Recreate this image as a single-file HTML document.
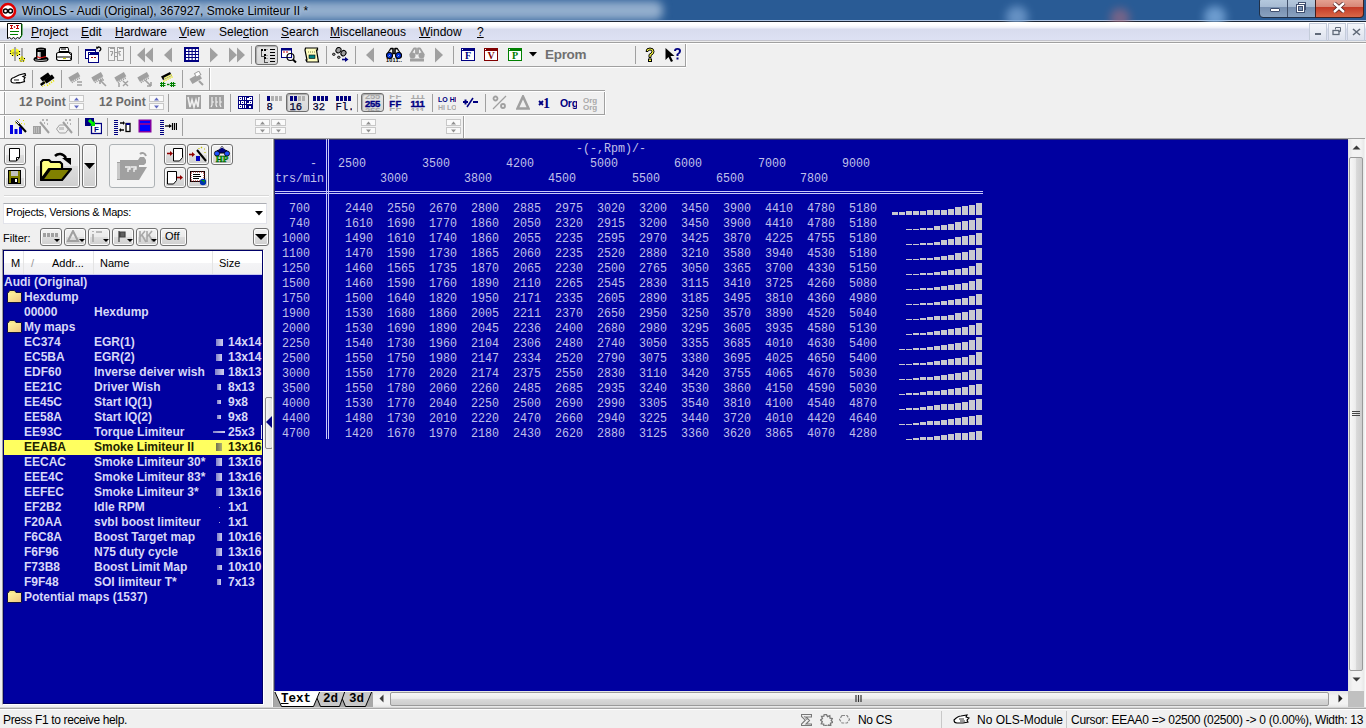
<!DOCTYPE html>
<html><head><meta charset="utf-8">
<style>
*{box-sizing:border-box;margin:0;padding:0}
html,body{width:1366px;height:728px;overflow:hidden;background:#F0F0F0;font-family:"Liberation Sans",sans-serif;}
.a{position:absolute}
#title{left:0;top:0;width:1366px;height:22px;background:#295B95;overflow:hidden}
#title .glow{left:-30px;top:1px;width:693px;height:19px;background:#93AECD;filter:blur(4px);border-radius:8px}
#title .txt{left:22px;top:4px;font-size:12px;color:#000;white-space:nowrap;text-shadow:0 0 5px #B8CCE4,0 0 3px #C0D0E6}
#menu{left:0;top:22px;width:1366px;height:20px;background:linear-gradient(#FFFFFF 0,#FFFFFF 3px,#ECEEF8 6px,#D8DCEE 7px,#DDE1F3 17px,#DDE1F3 18px,#C4C4CC 18px,#C4C4CC 19px,#ECECEC 19px)}
#menu span{position:absolute;top:3px;font-size:12px;color:#000;white-space:nowrap}
#menu u{text-decoration:underline;text-underline-offset:1px}
#tbar{left:0;top:42px;width:1366px;height:97px;background:#F0F0F0;border-bottom:1px solid #A0A0A0}
.pbtn{position:absolute;border:1px solid #6E6E6E;border-radius:3px;background:linear-gradient(#E6E6E6,#D8D8D8);box-shadow:inset 1px 1px 1px #A8A8A8}
.spn{position:absolute;border:1px solid #C8C8C8;background:#FAFAFA}
.tpt{font-size:12px;font-weight:bold;color:#6A6A6A;white-space:nowrap}
.hl{position:absolute;height:1px;background:#A0A0A0}
.vl{position:absolute;width:1px;background:#A0A0A0}
.sep{position:absolute;width:1px;height:18px;background:#A0A0A0}
#left{left:0;top:139px;width:274px;height:569px;background:#F0F0F0}
#data{left:273px;top:138px;width:1093px;height:569px;background:#F0F0F0}
#blue{left:1px;top:1px;width:1074px;height:552px;background:#0000A0;overflow:hidden}
.vsb{background:linear-gradient(90deg,#E3E3E3,#F3F3F3 30%,#F3F3F3 80%,#E8E8E8)}
.vthumb{border:1px solid #9A9A9A;border-radius:2px;background:linear-gradient(90deg,#F7F7F7,#ECECEC 45%,#D8D8D8 55%,#CDCDCD)}
.hsb{background:linear-gradient(#E3E3E3,#F3F3F3 30%,#F3F3F3 80%,#E8E8E8)}
.hthumb{border:1px solid #9A9A9A;border-radius:2px;background:linear-gradient(#F7F7F7,#ECECEC 45%,#D8D8D8 55%,#CDCDCD)}
.m{position:absolute;font-family:"Liberation Mono",monospace;font-size:11.67px;color:#C0C0EA;white-space:pre;line-height:15px;transform:translateY(1px) scaleY(1.06);transform-origin:0 100%}
.bar{position:absolute;width:6px;background:#C8C8D0}
.mono{font-family:"Liberation Mono",monospace;font-size:11.67px;color:#D4D4F4;white-space:pre;line-height:15px}
#status{left:0;top:707px;width:1366px;height:21px;background:linear-gradient(#D4D4D4 0,#D4D4D4 1px,#A8A8A8 1px,#A8A8A8 2px,#FFFFFF 2px,#FFFFFF 3px,#F0F0F0 3px)}
#status span{position:absolute;top:6px;font-size:12px;color:#000;white-space:nowrap}
#list{left:2px;top:110px;width:262px;height:456px;background:#0000A0;border:1px solid;border-color:#A0A0A0 #FFFFFF #FFFFFF #A0A0A0;overflow:hidden}
.lhdr{background:linear-gradient(#FFFFFF 0,#FFFFFF 50%,#F4F4F6 51%,#F0F0F2 100%)}
.lh{font-size:11px;white-space:nowrap;line-height:12px}
.lt{font-size:12px;font-weight:bold;white-space:nowrap;line-height:15px}
.lrow{position:absolute;left:0;height:15px;width:259px;font-size:11px;font-weight:bold;color:#D8D8F8;letter-spacing:0.5px;white-space:nowrap}
.lrow span{position:absolute;top:1px}
.tabt{font-family:"Liberation Mono",monospace;font-weight:bold;font-size:12.5px;line-height:14px;color:#000;white-space:pre}
.btn{position:absolute;border:1px solid #707070;border-radius:3px;background:linear-gradient(#F2F2F2 0,#EBEBEB 50%,#DDDDDD 51%,#CFCFCF 100%);box-shadow:inset 0 0 0 1px #FCFCFC}
.btnd{position:absolute;border:1px solid #ADB2B5;border-radius:3px;background:#F4F4F4}
.mdib{border:1px solid #C4CCDA;background:linear-gradient(#F4F6FA,#DDE2EE)}
</style></head><body>
<div id="title" class="a">
  <div class="a glow"></div>
  <div class="a" style="left:0;top:20px;width:1366px;height:1px;background:#A8C0E0"></div><div class="a" style="left:0;top:21px;width:1366px;height:1px;background:#1C2634"></div>
  <svg class="a" style="left:0;top:2px" width="17" height="18"><circle cx="8" cy="9" r="7" fill="#fff" stroke="#E00000" stroke-width="2.6"/><circle cx="5.5" cy="9" r="2" fill="none" stroke="#000" stroke-width="1.4"/><circle cx="10.5" cy="9" r="2" fill="none" stroke="#000" stroke-width="1.4"/></svg>
  <div class="a" style="left:1006px;top:6px;width:22px;height:22px;border-radius:50%;background:#7FA8D8;filter:blur(4px);opacity:0.7"></div>
  <div class="a" style="left:1110px;top:8px;width:20px;height:20px;border-radius:50%;background:#A86A80;filter:blur(4px);opacity:0.6"></div>
  <div class="a" style="left:1204px;top:6px;width:22px;height:22px;border-radius:50%;background:#8AB8E8;filter:blur(4px);opacity:0.7"></div>
  <div class="a" style="left:1259px;top:-3px;width:105px;height:21px;border:1px solid #203048;border-radius:4px;background:linear-gradient(#B8CCE0 0,#A8BCD4 45%,#7890B0 50%,#8AA2C0 100%)"></div>
  <div class="a" style="left:1315px;top:-3px;width:49px;height:21px;border:1px solid #402020;border-radius:0 0 4px 0;background:linear-gradient(#E8A898 0,#D88878 45%,#C43C28 50%,#D86848 100%)"></div>
  <div class="a" style="left:1287px;top:0;width:1px;height:17px;background:#40506A"></div>
  <div class="a" style="left:1270px;top:8px;width:10px;height:4px;background:#fff;border:1px solid #405070;border-radius:1px"></div>
  <svg class="a" style="left:1294px;top:1px" width="14" height="13"><rect x="4.5" y="1.5" width="7" height="7" fill="#fff" stroke="#405070"/><rect x="2.5" y="3.5" width="8" height="8" fill="#fff" stroke="#405070"/><rect x="4.5" y="5.5" width="4" height="4" fill="#7890B0" stroke="#405070"/></svg>
  <svg class="a" style="left:1332px;top:2px" width="14" height="11"><path d="M2 1l10 9M12 1L2 10" stroke="#502020" stroke-width="4"/><path d="M2 1l10 9M12 1L2 10" stroke="#fff" stroke-width="2.4"/></svg>
  <div class="a txt">WinOLS - Audi (Original), 367927, Smoke Limiteur II *</div>
</div>
<div id="menu" class="a">
  <svg class="a" style="left:7px;top:1px" width="17" height="17"><path d="M0.5 0.5h14v12l-2 3-2-1-2 1.5-2-1.5-2 1.5-2-1.5-2 1z" fill="#fff" stroke="#000"/><path d="M15 1v11l-2 3" stroke="#008000" stroke-width="1" fill="none"/><path d="M3 2.5h3M4.5 2.5v3M3 5.5h3M9 2.5h3M10.5 2.5v3M9 5.5h3" stroke="#C00000" stroke-width="1"/><path d="M7.5 3l1 1-1 1-1-1z" fill="#C00000"/><path d="M3 8.5h9M3 11.5h8" stroke="#008000" stroke-width="1.2"/></svg>
  <span style="left:31px"><u>P</u>roject</span>
  <span style="left:81px"><u>E</u>dit</span>
  <span style="left:115px"><u>H</u>ardware</span>
  <span style="left:179px"><u>V</u>iew</span>
  <span style="left:219px">Sele<u>c</u>tion</span>
  <span style="left:281px"><u>S</u>earch</span>
  <span style="left:330px"><u>M</u>iscellaneous</span>
  <span style="left:419px"><u>W</u>indow</span>
  <span style="left:477px"><u>?</u></span>
  <div class="a mdib" style="left:1309px;top:1px;width:18px;height:18px"></div>
  <div class="a mdib" style="left:1328px;top:1px;width:18px;height:18px"></div>
  <div class="a mdib" style="left:1347px;top:1px;width:18px;height:18px"></div>
  <i class="a" style="left:1315px;top:11px;width:6px;height:2px;background:#606A78"></i>
  <svg class="a" style="left:1332px;top:5px" width="10" height="9"><path d="M3.5 2.5v-2h5v4h-2" fill="none" stroke="#606A78"/><rect x="1" y="3.5" width="6" height="4" fill="none" stroke="#606A78" stroke-width="1.3"/></svg>
  <svg class="a" style="left:1352px;top:6px" width="9" height="8"><path d="M1 1l7 6M8 1L1 7" stroke="#606A78" stroke-width="1.6"/></svg>
</div>
<div id="tbar" class="a"><i class="a" style="left:0px;top:0px;width:1366px;height:1px;background:#A0A0A0"></i>
<i class="a" style="left:0px;top:1px;width:1366px;height:1px;background:#FFFFFF"></i>
<i class="a" style="left:0px;top:24px;width:686px;height:1px;background:#A0A0A0"></i>
<i class="a" style="left:0px;top:25px;width:686px;height:1px;background:#FFFFFF"></i>
<i class="a" style="left:0px;top:48px;width:605px;height:1px;background:#A0A0A0"></i>
<i class="a" style="left:0px;top:49px;width:605px;height:1px;background:#FFFFFF"></i>
<i class="a" style="left:0px;top:72px;width:605px;height:1px;background:#A0A0A0"></i>
<i class="a" style="left:0px;top:73px;width:605px;height:1px;background:#FFFFFF"></i>
<i class="a" style="left:685px;top:2px;width:1px;height:22px;background:#A0A0A0"></i>
<i class="a" style="left:686px;top:2px;width:1px;height:22px;background:#FFFFFF"></i>
<i class="a" style="left:209px;top:26px;width:1px;height:22px;background:#A0A0A0"></i>
<i class="a" style="left:210px;top:26px;width:1px;height:22px;background:#FFFFFF"></i>
<i class="a" style="left:604px;top:50px;width:1px;height:22px;background:#A0A0A0"></i>
<i class="a" style="left:605px;top:50px;width:1px;height:22px;background:#FFFFFF"></i>
<i class="a" style="left:463px;top:74px;width:1px;height:22px;background:#A0A0A0"></i>
<i class="a" style="left:464px;top:74px;width:1px;height:22px;background:#FFFFFF"></i>
<i class="a" style="left:0px;top:2px;width:4px;height:22px;background:#FAFAFA"></i>
<i class="a" style="left:4px;top:2px;width:1px;height:22px;background:#A0A0A0"></i>
<i class="a" style="left:5px;top:2px;width:1px;height:22px;background:#FFFFFF"></i>
<i class="a" style="left:0px;top:26px;width:4px;height:22px;background:#FAFAFA"></i>
<i class="a" style="left:4px;top:26px;width:1px;height:22px;background:#A0A0A0"></i>
<i class="a" style="left:5px;top:26px;width:1px;height:22px;background:#FFFFFF"></i>
<i class="a" style="left:0px;top:50px;width:4px;height:22px;background:#FAFAFA"></i>
<i class="a" style="left:4px;top:50px;width:1px;height:22px;background:#A0A0A0"></i>
<i class="a" style="left:5px;top:50px;width:1px;height:22px;background:#FFFFFF"></i>
<i class="a" style="left:0px;top:74px;width:4px;height:22px;background:#FAFAFA"></i>
<i class="a" style="left:4px;top:74px;width:1px;height:22px;background:#A0A0A0"></i>
<i class="a" style="left:5px;top:74px;width:1px;height:22px;background:#FFFFFF"></i>
<i class="a" style="left:78px;top:4px;width:1px;height:18px;background:#A0A0A0"></i>
<i class="a" style="left:130px;top:4px;width:1px;height:18px;background:#A0A0A0"></i>
<i class="a" style="left:251px;top:4px;width:1px;height:18px;background:#A0A0A0"></i>
<i class="a" style="left:326px;top:4px;width:1px;height:18px;background:#A0A0A0"></i>
<i class="a" style="left:355px;top:4px;width:1px;height:18px;background:#A0A0A0"></i>
<i class="a" style="left:453px;top:4px;width:1px;height:18px;background:#A0A0A0"></i>
<i class="a" style="left:635px;top:4px;width:1px;height:18px;background:#A0A0A0"></i>
<i class="a" style="left:32px;top:28px;width:1px;height:18px;background:#A0A0A0"></i>
<i class="a" style="left:61px;top:28px;width:1px;height:18px;background:#A0A0A0"></i>
<i class="a" style="left:182px;top:28px;width:1px;height:18px;background:#A0A0A0"></i>
<i class="a" style="left:168px;top:52px;width:1px;height:18px;background:#A0A0A0"></i>
<i class="a" style="left:230px;top:52px;width:1px;height:18px;background:#A0A0A0"></i>
<i class="a" style="left:259px;top:52px;width:1px;height:18px;background:#A0A0A0"></i>
<i class="a" style="left:357px;top:52px;width:1px;height:18px;background:#A0A0A0"></i>
<i class="a" style="left:432px;top:52px;width:1px;height:18px;background:#A0A0A0"></i>
<i class="a" style="left:485px;top:52px;width:1px;height:18px;background:#A0A0A0"></i>
<i class="a" style="left:78px;top:76px;width:1px;height:18px;background:#A0A0A0"></i>
<i class="a" style="left:107px;top:76px;width:1px;height:18px;background:#A0A0A0"></i>
<i class="a" style="left:182px;top:76px;width:1px;height:18px;background:#A0A0A0"></i>
<svg class="a" style="left:9px;top:5px" width="17" height="16"><ellipse cx="6" cy="5.5" rx="5" ry="4" fill="#F8F820"/><path d="M1.5 3.5v1M1.5 6v1M3 8.5h1M5.5 9h1M8 8.5h1M10.5 7v1M10.5 4v1" stroke="#000" stroke-width="1.2"/><rect x="5" y="0" width="2" height="14" fill="#A8A8A8"/><ellipse cx="6" cy="6" rx="3" ry="1.5" fill="#A0A040" opacity="0.7"/><ellipse cx="13" cy="12.5" rx="3" ry="2.5" fill="#F0F020"/><path d="M10.5 11v1M15.5 11v1M11.5 14h1M14 14h1" stroke="#000" stroke-width="1"/><rect x="12" y="1" width="2" height="13" fill="#A8A8A8"/><rect x="12" y="9" width="2" height="4" fill="#C0C030"/></svg>
<svg class="a" style="left:33px;top:5px" width="16" height="16"><path d="M3 1.5Q8 -0.5 13 1.5V11H3z" fill="#000"/><path d="M0.5 12.5Q0.5 10 3 10h10q2.5 0 2.5 2.5Q15.5 15 8 15T0.5 12.5z" fill="#000"/><path d="M2 12.8Q8 14.5 14 12.8" stroke="#B0B0B0" stroke-width="1" fill="none"/><path d="M5 2.5h6" stroke="#808080" stroke-width="0.8"/><rect x="4.5" y="5" width="3" height="7" fill="#E8E8E8"/><rect x="6.5" y="5" width="1" height="7" fill="#A0A0A0"/><path d="M4 9.5l3 1.5 6-1.5" stroke="#E01010" stroke-width="1.1" fill="none"/></svg>
<svg class="a" style="left:56px;top:5px" width="16" height="16"><path d="M4 0.5h8l1 4H3z" fill="#fff" stroke="#000"/><path d="M5 2h5" stroke="#000"/><rect x="0.5" y="5.5" width="15" height="8" rx="2" fill="#fff" stroke="#000" stroke-width="1.2"/><path d="M1 10h14" stroke="#000"/><path d="M7 11.5h3" stroke="#C0C000" stroke-width="1.2"/><path d="M13 6l2 2M14 11l1 1" stroke="#000" stroke-width="0.8"/></svg>
<svg class="a" style="left:85px;top:2px" width="17" height="19"><rect x="0.5" y="5.5" width="10" height="9" fill="#fff" stroke="#000080"/><rect x="0" y="5" width="11" height="2" fill="#000080"/><rect x="3.5" y="8.5" width="10" height="10" fill="#fff" stroke="#000080"/><rect x="3" y="8" width="11" height="3" fill="#000080"/><rect x="4" y="9" width="1" height="1" fill="#fff"/><path d="M6 13.5h2M9 13.5h2" stroke="#A01010" stroke-width="1"/><path d="M12.5 3.5a2 2 0 1 1 1.5 3.5" fill="none" stroke="#000" stroke-width="1.3"/><path d="M11 2.5l3 1-2.5 2z" fill="#000"/></svg>
<svg class="a" style="left:108px;top:5px" width="17" height="15"><rect x="0.5" y="0.5" width="6" height="13" fill="#F4F4F4" stroke="#A0A0A0"/><rect x="0" y="0" width="7" height="2" fill="#A0A0A0"/><rect x="9.5" y="0.5" width="6" height="13" fill="#F4F4F4" stroke="#A0A0A0"/><rect x="9" y="0" width="7" height="2" fill="#A0A0A0"/><rect x="1" y="1" width="1" height="1" fill="#fff"/><rect x="10" y="1" width="1" height="1" fill="#fff"/><path d="M7 5.5h2M7 9.5h2" stroke="#A0A0A0"/><path d="M2 4.5h2.5v2l-1 1v1.5M13 4.5h-2v2l1 1v1.5" stroke="#A0A0A0" fill="none" stroke-width="1.2"/></svg>
<svg class="a" style="left:137px;top:5px" width="16" height="16"><path d="M0 8l8-7.5v15zM8 8l8-7.5v15z" fill="#A0A0A0"/></svg>
<svg class="a" style="left:164px;top:5px" width="9" height="16"><path d="M0 8l8-7.5v15z" fill="#A0A0A0"/></svg>
<svg class="a" style="left:184px;top:5px" width="16" height="15"><rect x="0" y="0" width="15" height="15" fill="#000080"/><rect x="2.0" y="2" width="2.3" height="2" fill="#fff"/><rect x="2.0" y="5" width="2.3" height="2" fill="#fff"/><rect x="2.0" y="8" width="2.3" height="2" fill="#fff"/><rect x="2.0" y="11" width="2.3" height="2" fill="#fff"/><rect x="5.3" y="2" width="2.3" height="2" fill="#fff"/><rect x="5.3" y="5" width="2.3" height="2" fill="#fff"/><rect x="5.3" y="8" width="2.3" height="2" fill="#fff"/><rect x="5.3" y="11" width="2.3" height="2" fill="#fff"/><rect x="8.6" y="2" width="2.3" height="2" fill="#fff"/><rect x="8.6" y="5" width="2.3" height="2" fill="#fff"/><rect x="8.6" y="8" width="2.3" height="2" fill="#fff"/><rect x="8.6" y="11" width="2.3" height="2" fill="#fff"/><rect x="11.9" y="2" width="2.3" height="2" fill="#fff"/><rect x="11.9" y="5" width="2.3" height="2" fill="#fff"/><rect x="11.9" y="8" width="2.3" height="2" fill="#fff"/><rect x="11.9" y="11" width="2.3" height="2" fill="#fff"/></svg>
<svg class="a" style="left:210px;top:5px" width="9" height="16"><path d="M8 8L0 0.5v15z" fill="#A0A0A0"/></svg>
<svg class="a" style="left:229px;top:5px" width="16" height="16"><path d="M8 8L0 0.5v15zM16 8L8 0.5v15z" fill="#A0A0A0"/></svg>
<div class="a pbtn" style="left:255px;top:3px;width:23px;height:20px"></div>
<svg class="a" style="left:260px;top:7px" width="16" height="14"><rect x="1" y="0" width="2" height="2" fill="#000"/><rect x="4" y="0" width="2" height="2" fill="#000"/><rect x="6" y="0" width="2" height="1" fill="#A0A0A0"/><rect x="1" y="2" width="1" height="6" fill="#505050"/><rect x="2" y="7" width="3" height="1" fill="#505050"/><rect x="4" y="5" width="2" height="2" fill="#000"/><rect x="6" y="6" width="2" height="1" fill="#A0A0A0"/><rect x="4" y="8" width="1" height="6" fill="#505050"/><rect x="4" y="8" width="2" height="2" fill="#000"/><rect x="6" y="9" width="2" height="1" fill="#A0A0A0"/><rect x="5" y="13" width="3" height="1" fill="#505050"/><rect x="10" y="0" width="5" height="1" fill="#000"/><rect x="10" y="3" width="5" height="1" fill="#000"/><rect x="10" y="6" width="5" height="1" fill="#000"/><rect x="10" y="9" width="5" height="1" fill="#000"/><rect x="10" y="12" width="5" height="1" fill="#000"/></svg>
<svg class="a" style="left:281px;top:5px" width="16" height="16"><rect x="0.5" y="1.5" width="10" height="9" fill="#fff" stroke="#000080"/><rect x="0" y="1" width="11" height="2.5" fill="#000080"/><path d="M2 5h2M5 5h2" stroke="#D00000" stroke-width="1"/><circle cx="9.5" cy="10" r="3.5" fill="none" stroke="#000" stroke-width="1.2"/><path d="M12 12.5l3 3" stroke="#000" stroke-width="2"/></svg>
<svg class="a" style="left:304px;top:5px" width="16" height="16"><path d="M1.5 1h12v2h-1l2 12H3l-1-2h1L1 3z" fill="#FFFFC0" stroke="#000" stroke-width="1.2"/><rect x="5" y="8" width="6" height="3.5" fill="#008080" stroke="#000" stroke-width="0.6"/><path d="M4 5h7" stroke="#808040" stroke-dasharray="1 1"/></svg>
<svg class="a" style="left:332px;top:5px" width="17" height="16"><ellipse cx="6.5" cy="3.2" rx="2.4" ry="2.8" fill="#A0A0A0" stroke="#000" stroke-width="1" transform="rotate(35 6.5 3.2)"/><ellipse cx="1.8" cy="7.3" rx="1.3" ry="1.1" fill="#A0A0A0" stroke="#000" stroke-width="0.9"/><ellipse cx="11.5" cy="6.2" rx="2.4" ry="2.8" fill="#A0A0A0" stroke="#000" stroke-width="1" transform="rotate(35 11.5 6.2)"/><ellipse cx="6.8" cy="10.3" rx="1.3" ry="1.1" fill="#A0A0A0" stroke="#000" stroke-width="0.9"/><path d="M10 12.5h4.5" stroke="#000080" stroke-width="1.6"/><path d="M13 10l3.5 2.5L13 15z" fill="#000080"/></svg>
<svg class="a" style="left:366px;top:5px" width="9" height="16"><path d="M0 8l8-7.5v15z" fill="#A0A0A0"/></svg>
<svg class="a" style="left:386px;top:5px" width="16" height="15"><path d="M1 8L5 1.5h2v5h2v-5h2L15 8" fill="none" stroke="#000" stroke-width="1.6" stroke-linejoin="round"/><path d="M5 2.5l-2.5 4M11 2.5l2.5 4" stroke="#fff" stroke-width="0.7"/><circle cx="3.5" cy="8.5" r="3" fill="#0030E0" stroke="#000" stroke-width="1.1"/><circle cx="12.5" cy="8.5" r="3" fill="#0030E0" stroke="#000" stroke-width="1.1"/><path d="M2.5 9.5l1.5-1.5M11.5 9.5l1.5-1.5" stroke="#A0C8FF" stroke-width="0.9"/><text x="0" y="15" font-family="Liberation Sans" font-weight="bold" font-size="5.5" fill="#000" letter-spacing="0.2">1011..</text></svg>
<svg class="a" style="left:409px;top:5px" width="16" height="15"><path d="M1 8L5 1.5h2v5h2v-5h2L15 8" fill="none" stroke="#A0A0A0" stroke-width="1.8" stroke-linejoin="round"/><circle cx="3.5" cy="8.5" r="3" fill="#A0A0A0"/><circle cx="12.5" cy="8.5" r="3" fill="#A0A0A0"/><rect x="1" y="11.5" width="14" height="3" fill="#A0A0A0"/></svg>
<svg class="a" style="left:435px;top:5px" width="9" height="16"><path d="M8 8L0 0.5v15z" fill="#A0A0A0"/></svg>
<svg class="a" style="left:461px;top:6px" width="15" height="14"><rect x="0.5" y="0.5" width="13" height="12" fill="#fff" stroke="#000080"/><rect x="0" y="0" width="14" height="3" fill="#000080"/><rect x="1" y="1" width="1" height="1" fill="#fff"/><text x="7" y="11" text-anchor="middle" font-family="Liberation Serif" font-weight="bold" font-size="10" fill="#000080">F</text></svg>
<svg class="a" style="left:484px;top:6px" width="15" height="14"><rect x="0.5" y="0.5" width="13" height="12" fill="#fff" stroke="#800000"/><rect x="0" y="0" width="14" height="3" fill="#800000"/><rect x="1" y="1" width="1" height="1" fill="#fff"/><text x="7" y="11" text-anchor="middle" font-family="Liberation Serif" font-weight="bold" font-size="10" fill="#800000">V</text></svg>
<svg class="a" style="left:508px;top:6px" width="15" height="14"><rect x="0.5" y="0.5" width="13" height="12" fill="#fff" stroke="#008000"/><rect x="0" y="0" width="14" height="3" fill="#008000"/><rect x="1" y="1" width="1" height="1" fill="#fff"/><text x="7" y="11" text-anchor="middle" font-family="Liberation Serif" font-weight="bold" font-size="10" fill="#008000">P</text></svg>
<svg class="a" style="left:529px;top:10px" width="9" height="5"><path d="M0 0h8L4 4.5z" fill="#000"/></svg>
<span class="a" style="left:545px;top:4.5px;font-size:13.5px;letter-spacing:-0.3px;font-weight:bold;color:#707070;white-space:nowrap">Eprom</span>
<svg class="a" style="left:644px;top:5px" width="12" height="16"><path d="M2 4.5Q2 1 6 1t4 3.5q0 2.5-3 4v2H5v-3q3-1.2 3-3.3Q8 3 6 3T4 4.5z" fill="#FFFF40" stroke="#000" stroke-width="1"/><rect x="4.5" y="12" width="3" height="2.5" fill="#FFFF40" stroke="#000" stroke-width="1"/></svg>
<svg class="a" style="left:665px;top:5px" width="17" height="16"><path d="M0.5 1v12l3-3 2.5 5 2-1-2.5-5h4z" fill="#000"/><path d="M9 4Q9 1 12.5 1T16 4q0 2-2.5 3.5V9h-2V7q2.5-1 2.5-3 0-1.3-1.5-1.3T11 4z" fill="#000080"/><rect x="11.5" y="10.5" width="2" height="2" fill="#000080"/></svg>
<svg class="a" style="left:10px;top:31px" width="17" height="12"><path d="M1 7.5Q1 5 4 4.5L9 2l6-1.5.5 2L13 3.5l2 1-1 2 .5 2-5 1.5H4Q1 10 1 7.5z" fill="#fff" stroke="#000" stroke-width="1.2"/><path d="M4 7h5M6 9.5h4" stroke="#000" stroke-width="0.9"/></svg>
<svg class="a" style="left:39px;top:29px" width="17" height="16"><path d="M1 7L9 1.5 11.5 5 3.5 10.5z" fill="#000"/><path d="M4 11.5l1 1.5M6 10l1 1.5M8 8.5l1 1.5M10 7l1 1.5" stroke="#E8E800" stroke-width="1.3"/><path d="M5 9L13 3.5 15.5 7 7.5 12.5z" fill="#000"/><path d="M8 13.5l1 1.5M10 12l1 1.5M12 10.5l1 1.5M14 9l1 1.5" stroke="#E8E800" stroke-width="1.3"/><path d="M1 13l4-3 1.5 2-4 3z" fill="#000"/><path d="M3 15.5l1 .5M5 14l1 .5" stroke="#E8E800" stroke-width="1.2"/></svg>
<svg class="a" style="left:68px;top:29px" width="16" height="16"><g transform="rotate(-30 7 6)"><rect x="1" y="3" width="11" height="5" fill="#A0A0A0"/><path d="M2 8v2M4 8v2M6 8v2M8 8v2M10 8v2" stroke="#A0A0A0" stroke-width="1.2"/></g><path d="M9 11h5M9 14h5" stroke="#A0A0A0" stroke-width="1.6"/></svg>
<svg class="a" style="left:91px;top:29px" width="16" height="16"><g transform="rotate(-30 7 6)"><rect x="1" y="3" width="11" height="5" fill="#A0A0A0"/><path d="M2 8v2M4 8v2M6 8v2M8 8v2M10 8v2" stroke="#A0A0A0" stroke-width="1.2"/></g><path d="M9 9l6 6M9 9v4M9 9h4" stroke="#A0A0A0" stroke-width="1.6" fill="none"/></svg>
<svg class="a" style="left:114px;top:29px" width="16" height="16"><g transform="rotate(-30 7 6)"><rect x="1" y="3" width="11" height="5" fill="#A0A0A0"/><path d="M2 8v2M4 8v2M6 8v2M8 8v2M10 8v2" stroke="#A0A0A0" stroke-width="1.2"/></g><path d="M9 10l5 5M14 10l-5 5M4 13h2M4 15h2" stroke="#A0A0A0" stroke-width="1.4"/></svg>
<svg class="a" style="left:137px;top:29px" width="16" height="16"><g transform="rotate(-30 7 6)"><rect x="1" y="3" width="11" height="5" fill="#A0A0A0"/><path d="M2 8v2M4 8v2M6 8v2M8 8v2M10 8v2" stroke="#A0A0A0" stroke-width="1.2"/></g><path d="M8 9l6 6M14 15v-4M14 15h-4" stroke="#A0A0A0" stroke-width="1.6" fill="none"/></svg>
<svg class="a" style="left:160px;top:29px" width="17" height="17"><path d="M1 5.5L10 1l2 3.5-9 4.5z" fill="#000"/><path d="M3.5 9.5l1 1M5.5 8.5l1 1M7.5 7.5l1 1M9.5 6.5l1 1M11.5 5.5l1 1" stroke="#E8E800" stroke-width="1.2"/><path d="M4 7.5l8-4" stroke="#F0F080" stroke-width="1.5"/><path d="M1.5 11v5M3.5 11v5M0 12.5h5.5M0 14.5h5.5M11.5 11v5M13.5 11v5M10 12.5h5.5M10 14.5h5.5" stroke="#008000" stroke-width="1.1"/><path d="M7 13.5h2.5" stroke="#008000" stroke-width="1.4"/></svg>
<svg class="a" style="left:189px;top:29px" width="16" height="16"><g transform="rotate(-30 8 7)"><rect x="1" y="4" width="11" height="6" fill="#A0A0A0"/><rect x="8" y="2" width="5" height="4" fill="#fff" stroke="#A0A0A0"/></g><path d="M10 10l4 4" stroke="#A0A0A0" stroke-width="2"/></svg>
<span class="a tpt" style="left:19px;top:53px">12 Point</span>
<span class="a tpt" style="left:99px;top:53px">12 Point</span>
<div class="a spn" style="left:69px;top:53px;width:15px;height:7px"></div><div class="a spn" style="left:69px;top:61px;width:15px;height:7px"></div>
<svg class="a" style="left:74px;top:55px" width="5" height="4"><path d="M0 3.5L2.5 0.5 5 3.5z" fill="#6068C0"/></svg>
<svg class="a" style="left:74px;top:63px" width="5" height="4"><path d="M0 0.5L2.5 3.5 5 0.5z" fill="#6068C0"/></svg>
<div class="a spn" style="left:149px;top:53px;width:15px;height:7px"></div><div class="a spn" style="left:149px;top:61px;width:15px;height:7px"></div>
<svg class="a" style="left:154px;top:55px" width="5" height="4"><path d="M0 3.5L2.5 0.5 5 3.5z" fill="#6068C0"/></svg>
<svg class="a" style="left:154px;top:63px" width="5" height="4"><path d="M0 0.5L2.5 3.5 5 0.5z" fill="#6068C0"/></svg>
<svg class="a" style="left:186px;top:53px" width="16" height="15"><rect x="0" y="0" width="15" height="14" fill="#A0A0A0"/><path d="M2 2l2 10 2-7 2 7 2-7 2 7 1-10" stroke="#F0F0F0" stroke-width="1.6" fill="none"/></svg>
<svg class="a" style="left:209px;top:53px" width="16" height="15"><rect x="0" y="0" width="15" height="14" fill="#A0A0A0"/><path d="M3 2v8l-1 2M7 2v8l1 2M11 2v8l1 2M3 7h2M7 7h2M11 7h2" stroke="#F0F0F0" stroke-width="1.2" fill="none"/></svg>
<svg class="a" style="left:238px;top:54px" width="15" height="13"><rect x="0" y="0" width="15" height="13" fill="#000080"/><rect x="1.5" y="1.5" width="2" height="2" fill="none" stroke="#fff" stroke-width="1"/><rect x="5" y="1" width="1" height="3" fill="#fff"/><rect x="7" y="1" width="1" height="3" fill="#fff"/><rect x="9" y="2" width="2" height="2" fill="#fff"/><rect x="11.5" y="1.5" width="2" height="2" fill="none" stroke="#fff" stroke-width="1"/><rect x="1" y="5" width="1" height="3" fill="#fff"/><rect x="3.5" y="5.5" width="2" height="2" fill="none" stroke="#fff" stroke-width="1"/><rect x="7" y="5" width="1" height="3" fill="#fff"/><rect x="9" y="7" width="2" height="1" fill="#fff"/><rect x="11.5" y="5.5" width="2" height="2" fill="none" stroke="#fff" stroke-width="1"/><rect x="1.5" y="9.5" width="2" height="2" fill="none" stroke="#fff" stroke-width="1"/><rect x="5" y="9" width="1" height="3" fill="#fff"/><rect x="7" y="9" width="1" height="3" fill="#fff"/><rect x="11" y="10" width="2" height="2" fill="#fff"/></svg>
<svg class="a" style="left:267px;top:54px" width="16" height="15"><rect x="0" y="0" width="3" height="5" fill="#000080"/><rect x="4" y="0" width="3" height="5" fill="#B0B0B0"/><rect x="8" y="0" width="3" height="5" fill="#B0B0B0"/><rect x="12" y="0" width="3" height="5" fill="#B0B0B0"/><text x="-0.5" y="13.5" font-family="Liberation Mono" font-size="10.5" fill="#000030" stroke="#000030" stroke-width="0.25">8</text></svg>
<div class="a pbtn" style="left:286px;top:51px;width:23px;height:19px"></div>
<svg class="a" style="left:290px;top:54px" width="16" height="15"><rect x="0" y="0" width="3" height="5" fill="#000080"/><rect x="4" y="0" width="3" height="5" fill="#000080"/><rect x="8" y="0" width="3" height="5" fill="#B0B0B0"/><rect x="12" y="0" width="3" height="5" fill="#B0B0B0"/><text x="-0.5" y="13.5" font-family="Liberation Mono" font-size="10.5" fill="#000030" stroke="#000030" stroke-width="0.25">16</text></svg>
<svg class="a" style="left:313px;top:54px" width="16" height="15"><rect x="0" y="0" width="3" height="5" fill="#000080"/><rect x="4" y="0" width="3" height="5" fill="#000080"/><rect x="8" y="0" width="3" height="5" fill="#000080"/><rect x="12" y="0" width="3" height="5" fill="#000080"/><text x="-0.5" y="13.5" font-family="Liberation Mono" font-size="10.5" fill="#000030" stroke="#000030" stroke-width="0.25">32</text></svg>
<svg class="a" style="left:336px;top:54px" width="16" height="15"><rect x="0" y="0" width="3" height="5" fill="#000080"/><rect x="4" y="0" width="3" height="5" fill="#000080"/><rect x="8" y="0" width="3" height="5" fill="#000080"/><rect x="12" y="0" width="3" height="5" fill="#000080"/><text x="-0.5" y="13.5" font-family="Liberation Mono" font-size="10.5" fill="#000030" stroke="#000030" stroke-width="0.25">Fl.</text></svg>
<div class="a pbtn" style="left:361px;top:51px;width:23px;height:19px"></div>
<svg class="a" style="left:364px;top:53px" width="17" height="16"><svg x="0" y="0" width="17" height="4" overflow="hidden"><text x="8.5" y="4" text-anchor="middle" font-family="Liberation Sans" font-weight="bold" font-size="9.5" letter-spacing="-0.3" fill="#A8A8A8">255</text></svg><text x="8.5" y="11.5" text-anchor="middle" font-family="Liberation Sans" font-weight="bold" font-size="9.5" letter-spacing="-0.3" fill="#000080" stroke="#000080" stroke-width="0.4">255</text><svg x="0" y="12" width="17" height="4" overflow="hidden"><text x="8.5" y="7" text-anchor="middle" font-family="Liberation Sans" font-weight="bold" font-size="9.5" letter-spacing="-0.3" fill="#A8A8A8">255</text></svg></svg>
<svg class="a" style="left:387px;top:53px" width="17" height="16"><svg x="0" y="0" width="17" height="4" overflow="hidden"><text x="8.5" y="4" text-anchor="middle" font-family="Liberation Sans" font-weight="bold" font-size="9.5" letter-spacing="0.5" fill="#A8A8A8">FF</text></svg><text x="8.5" y="11.5" text-anchor="middle" font-family="Liberation Sans" font-weight="bold" font-size="9.5" letter-spacing="0.5" fill="#000080" stroke="#000080" stroke-width="0.4">FF</text><svg x="0" y="12" width="17" height="4" overflow="hidden"><text x="8.5" y="7" text-anchor="middle" font-family="Liberation Sans" font-weight="bold" font-size="9.5" letter-spacing="0.5" fill="#A8A8A8">FF</text></svg></svg>
<svg class="a" style="left:409px;top:53px" width="17" height="16"><svg x="0" y="0" width="17" height="4" overflow="hidden"><text x="8.5" y="4" text-anchor="middle" font-family="Liberation Sans" font-weight="bold" font-size="9.5" letter-spacing="-0.2" fill="#A8A8A8">111</text></svg><text x="8.5" y="11.5" text-anchor="middle" font-family="Liberation Sans" font-weight="bold" font-size="9.5" letter-spacing="-0.2" fill="#000080" stroke="#000080" stroke-width="0.4">111</text><svg x="0" y="12" width="17" height="4" overflow="hidden"><text x="8.5" y="7" text-anchor="middle" font-family="Liberation Sans" font-weight="bold" font-size="9.5" letter-spacing="-0.2" fill="#A8A8A8">111</text></svg></svg>
<svg class="a" style="left:438px;top:53px" width="18" height="16"><text x="0" y="7" font-family="Liberation Sans" font-weight="bold" font-size="7" fill="#000080">LO HI</text><text x="0" y="15" font-family="Liberation Sans" font-weight="bold" font-size="7" fill="#A8A8A8">HI LO</text></svg>
<svg class="a" style="left:463px;top:53px" width="16" height="16"><path d="M0 7h5M2.5 4.5v5M10 7h5" stroke="#000080" stroke-width="2"/><path d="M4 12l6-9" stroke="#000080" stroke-width="1.5"/></svg>
<svg class="a" style="left:492px;top:53px" width="15" height="15"><circle cx="3.5" cy="3.5" r="2" fill="none" stroke="#A0A0A0" stroke-width="1.8"/><circle cx="11" cy="11" r="2" fill="none" stroke="#A0A0A0" stroke-width="1.8"/><path d="M1 14L14 1" stroke="#A0A0A0" stroke-width="1.3"/></svg>
<svg class="a" style="left:516px;top:53px" width="14" height="15"><path d="M7 1.5L1.5 13.5h11z" fill="none" stroke="#A0A0A0" stroke-width="2.5"/></svg>
<svg class="a" style="left:538px;top:53px" width="14" height="16"><path d="M1 6l4 4M5 6l-4 4" stroke="#000080" stroke-width="1.8"/><text x="5" y="13" font-family="Liberation Serif" font-weight="bold" font-size="14" fill="#000080">1</text></svg>
<svg class="a" style="left:560px;top:54px" width="17" height="16"><text x="0" y="11" font-family="Liberation Sans" font-weight="bold" font-size="10.5" fill="#000080" letter-spacing="-0.3">Org</text></svg>
<svg class="a" style="left:583px;top:53px" width="17" height="17"><text x="0" y="7.5" font-family="Liberation Sans" font-weight="bold" font-size="8" fill="#A8A8A8">Org</text><text x="0" y="14.5" font-family="Liberation Sans" font-weight="bold" font-size="8" fill="#A8A8A8">Org</text></svg>
<svg class="a" style="left:10px;top:77px" width="17" height="16"><rect x="0" y="6" width="3" height="9" fill="#0000E0"/><rect x="4.5" y="10" width="3" height="5" fill="#0000E0"/><rect x="9" y="8" width="3" height="7" fill="#0000E0"/><path d="M6 2l10 11" stroke="#000" stroke-width="2"/><path d="M6 2l3 3" stroke="#fff" stroke-width="1"/><path d="M9 0.5h1M13 1.5h1M11 4.5h1M14 5h1M5 4h1" stroke="#E0E000" stroke-width="1"/></svg>
<svg class="a" style="left:33px;top:77px" width="17" height="16"><rect x="0" y="7" width="8" height="8" fill="#A0A0A0"/><path d="M1 9h6M1 11h6M1 13h6" stroke="#D8D8D8" stroke-dasharray="1 1"/><path d="M7 3l9 11" stroke="#A0A0A0" stroke-width="2"/><path d="M9 1h2M13 1h2M11 4h1M14 5h1" stroke="#A0A0A0" stroke-width="1.5"/></svg>
<svg class="a" style="left:56px;top:77px" width="17" height="16"><path d="M0.5 10l3-4h6l3 4-3 4h-6z" fill="none" stroke="#A0A0A0"/><rect x="3" y="8" width="5" height="3" fill="#C8C8C8"/><path d="M7 3l9 11" stroke="#A0A0A0" stroke-width="2"/><path d="M9 1h2M13 1h2M11 4h1M14 5h1" stroke="#A0A0A0" stroke-width="1.5"/></svg>
<svg class="a" style="left:85px;top:76px" width="17" height="17"><rect x="0" y="0" width="9" height="8" fill="#000080"/><rect x="6.5" y="5.5" width="10" height="10" fill="#fff" stroke="#000080" stroke-width="1.3"/><text x="11.5" y="14" text-anchor="middle" font-family="Liberation Sans" font-weight="bold" font-size="8" fill="#000080">F</text><path d="M4 2l5 5" stroke="#00FF00" stroke-width="3"/><path d="M5 8h5V3z" fill="#00E000"/></svg>
<svg class="a" style="left:114px;top:77px" width="17" height="16"><path d="M0 1.5h4M0 3.5h4M0 5.5h4M0 7.5h4M0 9.5h4M0 11.5h4M0 13.5h4M0 15.5h4" stroke="#000080" stroke-width="1"/><path d="M6 4h4M6 11h4" stroke="#000" stroke-width="1.3"/><path d="M9 2l2 2-2 2zM7 9l-2 2 2 2z" fill="#000"/><rect x="12" y="4.5" width="4" height="8" fill="#fff" stroke="#000" stroke-width="1.3"/><rect x="12" y="4" width="4" height="2" fill="#000080"/></svg>
<svg class="a" style="left:138px;top:77px" width="14" height="14"><rect x="0.5" y="0.5" width="13" height="13" fill="#8000A0"/><rect x="2" y="2" width="10" height="2" fill="#0000FF"/><rect x="2" y="6" width="10" height="6" fill="#0000FF"/></svg>
<svg class="a" style="left:160px;top:77px" width="17" height="16"><path d="M0 1.5h4M0 3.5h4M0 5.5h4M0 7.5h4M0 9.5h4M0 11.5h4M0 13.5h4M0 15.5h4" stroke="#000080" stroke-width="1"/><path d="M5 7h5" stroke="#000" stroke-width="1.3"/><path d="M9 5l3 2-3 2z" fill="#000"/><path d="M12.5 4v7M14.5 4v7M16.5 4v7" stroke="#000" stroke-width="1.2"/></svg>
<div class="a spn" style="left:255px;top:77px;width:15px;height:7px"></div><div class="a spn" style="left:255px;top:85px;width:15px;height:7px"></div>
<svg class="a" style="left:260px;top:79px" width="5" height="4"><path d="M0 3.5L2.5 0.5 5 3.5z" fill="#909090"/></svg>
<svg class="a" style="left:260px;top:87px" width="5" height="4"><path d="M0 0.5L2.5 3.5 5 0.5z" fill="#909090"/></svg>
<div class="a spn" style="left:271px;top:77px;width:15px;height:7px"></div><div class="a spn" style="left:271px;top:85px;width:15px;height:7px"></div>
<svg class="a" style="left:276px;top:79px" width="5" height="4"><path d="M0 3.5L2.5 0.5 5 3.5z" fill="#909090"/></svg>
<svg class="a" style="left:276px;top:87px" width="5" height="4"><path d="M0 0.5L2.5 3.5 5 0.5z" fill="#909090"/></svg>
<div class="a spn" style="left:361px;top:77px;width:15px;height:7px"></div><div class="a spn" style="left:361px;top:85px;width:15px;height:7px"></div>
<svg class="a" style="left:366px;top:79px" width="5" height="4"><path d="M0 3.5L2.5 0.5 5 3.5z" fill="#909090"/></svg>
<svg class="a" style="left:366px;top:87px" width="5" height="4"><path d="M0 0.5L2.5 3.5 5 0.5z" fill="#909090"/></svg>
<div class="a spn" style="left:446px;top:77px;width:15px;height:7px"></div><div class="a spn" style="left:446px;top:85px;width:15px;height:7px"></div>
<svg class="a" style="left:451px;top:79px" width="5" height="4"><path d="M0 3.5L2.5 0.5 5 3.5z" fill="#909090"/></svg>
<svg class="a" style="left:451px;top:87px" width="5" height="4"><path d="M0 0.5L2.5 3.5 5 0.5z" fill="#909090"/></svg></div>
<div id="left" class="a"><!-- top buttons -->
<div class="a btn" style="left:4px;top:5px;width:22px;height:21px"></div>
<svg class="a" style="left:9px;top:9px" width="12" height="14"><path d="M0.5 0.5h10v9l-3 3.5h-7z" fill="#fff" stroke="#000"/><path d="M10.5 9.5h-3v3.5" fill="none" stroke="#000"/></svg>
<div class="a btn" style="left:4px;top:28px;width:22px;height:21px"></div>
<svg class="a" style="left:8px;top:31px" width="13" height="14"><rect x="0.5" y="0.5" width="12" height="13" fill="#808000" stroke="#000"/><rect x="3" y="1" width="7" height="5" fill="#C0C0C0"/><rect x="3" y="8" width="7" height="5.5" fill="#000"/><rect x="7" y="9" width="2" height="3" fill="#fff"/></svg>
<div class="a btn" style="left:34px;top:5px;width:46px;height:44px"></div>
<svg class="a" style="left:40px;top:12px" width="34" height="30"><path d="M26 7c-3-5-8-5-11-2" fill="none" stroke="#000" stroke-width="2.5"/><path d="M22 7h9v7z" fill="#000"/><path d="M1 29V11l2-2h6l2 2h9l2 2v5H9z" fill="#FFFF80" stroke="#000" stroke-width="2.2" stroke-linejoin="round"/><path d="M2 29l8-11h21l-9 11z" fill="#808000" stroke="#000" stroke-width="2.2" stroke-linejoin="round"/></svg>
<div class="a btn" style="left:82px;top:5px;width:15px;height:44px"></div>
<svg class="a" style="left:84px;top:24px" width="11" height="7"><path d="M0 0h11L5.5 6z" fill="#000"/></svg>
<div class="a btnd" style="left:109px;top:5px;width:46px;height:44px"></div>
<svg class="a" style="left:116px;top:12px" width="32" height="30"><path d="M4 9h18l2-3h4l2 3v3l-2 2H4z" fill="#A0A0A0"/><path d="M24 3c2-2 5-1 6 2" fill="none" stroke="#A0A0A0" stroke-width="2"/><rect x="1" y="11" width="22" height="18" fill="#A0A0A0"/><path d="M1 12h3v16H1z" fill="#C8C8C8"/><path d="M4 29l6-13h21l-8 13z" fill="#A0A0A0"/><path d="M9 16h5v2h-2v3M15 16h5v2h-2v3" fill="none" stroke="#F0F0F0" stroke-width="1.4"/></svg>
<div class="a btn" style="left:164px;top:5px;width:22px;height:21px"></div>
<svg class="a" style="left:167px;top:9px" width="17" height="14"><path d="M6.5 0.5h9v9l-3 3.5h-6z" fill="#fff" stroke="#000"/><path d="M0 5.5h4" stroke="#900000" stroke-width="1.6"/><path d="M3 3l3 2.5-3 2.5z" fill="#900000"/></svg>
<div class="a btn" style="left:187px;top:5px;width:22px;height:21px"></div>
<svg class="a" style="left:189px;top:7px" width="18" height="17"><path d="M0 8.5h4" stroke="#900000" stroke-width="1.6"/><path d="M3 6l3 2.5-3 2.5z" fill="#900000"/><path d="M8 4l9 11" stroke="#000" stroke-width="2"/><rect x="7" y="10" width="4" height="5" fill="#0000C0"/><path d="M12 1l1 1M15 3l1 0M10 2l0 1M16 6l0 1" stroke="#C0C000" stroke-width="1.2"/></svg>
<div class="a btn" style="left:211px;top:5px;width:22px;height:21px"></div>
<svg class="a" style="left:213px;top:7px" width="18" height="17"><path d="M9 0.5L2 7h14z" fill="#000080" stroke="#000" stroke-width="1"/><path d="M5 3.5L9 1l4 2.5" stroke="#fff" stroke-width="0.8" fill="none"/><circle cx="4" cy="7.5" r="2.6" fill="#2050FF" stroke="#000" stroke-width="0.8"/><circle cx="14" cy="7.5" r="2.6" fill="#2050FF" stroke="#000" stroke-width="0.8"/><text x="9" y="16" text-anchor="middle" font-family="Liberation Serif" font-weight="bold" font-size="9" fill="#00C000" stroke="#004000" stroke-width="0.4">HP</text></svg>
<div class="a btn" style="left:164px;top:28px;width:22px;height:21px"></div>
<svg class="a" style="left:167px;top:32px" width="17" height="14"><path d="M0.5 0.5h9v9l-3 3.5h-6z" fill="#fff" stroke="#000"/><path d="M10 6.5h4" stroke="#900000" stroke-width="1.6"/><path d="M13 4l3 2.5-3 2.5z" fill="#900000"/></svg>
<div class="a btn" style="left:187px;top:28px;width:22px;height:21px"></div>
<svg class="a" style="left:190px;top:31px" width="17" height="16"><rect x="0.5" y="1.5" width="14" height="10" fill="#fff" stroke="#000"/><rect x="1" y="2" width="13" height="9" fill="none" stroke="#900000" stroke-dasharray="1 1"/><path d="M3 4.5h7M3 6.5h8M3 8.5h6" stroke="#000" stroke-width="1"/><circle cx="13" cy="12" r="3.2" fill="#0030B0"/><path d="M11.5 10.5h2.5v2" stroke="#00A000" stroke-width="1.2" fill="none"/></svg>
<!-- separator -->
<div class="a" style="left:4px;top:56px;width:265px;height:1px;background:#D8D8D8"></div>
<div class="a" style="left:4px;top:57px;width:265px;height:1px;background:#FFFFFF"></div>
<!-- combo -->
<div class="a" style="left:3px;top:64px;width:264px;height:21px;background:#fff;border:1px solid #E2E3EA;border-top-color:#ABADB3"></div>
<span class="a" style="left:6px;top:67px;font-size:11px;letter-spacing:-0.25px;color:#000;white-space:nowrap">Projects, Versions &amp; Maps:</span>
<svg class="a" style="left:255px;top:72px" width="8" height="5"><path d="M0 0h8L4 4.5z" fill="#000"/></svg>
<!-- filter -->
<span class="a" style="left:3px;top:93px;font-size:11px;color:#000;white-space:nowrap">Filter:</span>
<div class="a btn" style="left:40px;top:89px;width:22px;height:18px"></div>
<div class="a btn" style="left:64px;top:89px;width:22px;height:18px"></div>
<div class="a btn" style="left:88px;top:89px;width:22px;height:18px"></div>
<div class="a btn" style="left:112px;top:89px;width:22px;height:18px"></div>
<div class="a btn" style="left:136px;top:89px;width:22px;height:18px"></div>
<div class="a btn" style="left:160px;top:89px;width:27px;height:18px"></div>
<span class="a" style="left:165px;top:91px;font-size:11px;color:#000;white-space:nowrap">Off</span>
<svg class="a" style="left:43px;top:93px" width="18" height="11"><path d="M0 1h3v4H0zM4 1h3v4H4zM8 1h3v4H8zM12 1h3v4h-3z" fill="#A0A0A0"/><path d="M11 7h6l-3 3z" fill="#000"/></svg>
<svg class="a" style="left:66px;top:91px" width="19" height="14"><path d="M2 11L7 1l5 10z" fill="none" stroke="#A0A0A0" stroke-width="2"/><path d="M13 9h6l-3 3z" fill="#000"/></svg>
<svg class="a" style="left:90px;top:91px" width="19" height="14"><path d="M3 4v8M3 1v1M6 2h6" stroke="#A8A8A8" stroke-width="1.6"/><path d="M13 9h6l-3 3z" fill="#000"/></svg>
<svg class="a" style="left:114px;top:91px" width="19" height="14"><path d="M5 1v11M6 2h5v5H6z" stroke="#404040" fill="#606060" stroke-width="1.2"/><path d="M13 9h6l-3 3z" fill="#000"/></svg>
<svg class="a" style="left:138px;top:91px" width="19" height="14"><path d="M2 1v11M2 7l5-6M4 5l4 7M9 1v11M9 7l5-6M11 5l4 7" stroke="#A8A8A8" stroke-width="1.6" fill="none"/><path d="M13 9h6l-3 3z" fill="#000"/></svg>
<div class="a btn" style="left:253px;top:89px;width:16px;height:18px"></div>
<svg class="a" style="left:255px;top:95px" width="12" height="7"><path d="M0 0h12L6 6z" fill="#000"/></svg>
<!-- splitter -->
<div class="a" style="left:265px;top:258px;width:8px;height:52px;border:1px solid #8A8A8A;border-radius:2px;background:linear-gradient(90deg,#F4F4F4,#E2E2E2)"></div>
<svg class="a" style="left:266px;top:276px" width="7" height="14"><path d="M7 0v14L0 7z" fill="#000080"/></svg>

  <div id="list" class="a"><i class="a" style="left:0;top:0;width:1px;height:454px;background:#000068"></i><i class="a" style="left:0;top:0;width:260px;height:1px;background:#000068"></i><i class="a" style="left:259px;top:0;width:1px;height:454px;background:#000068"></i><i class="a" style="left:0;top:453px;width:260px;height:1px;background:#000068"></i>
<div class="a lhdr" style="left:1px;top:1px;width:258px;height:23px"></div>
<i class="a" style="left:20px;top:1px;width:1px;height:23px;background:#E4E4E4"></i>
<i class="a" style="left:90px;top:1px;width:1px;height:23px;background:#E4E4E4"></i>
<i class="a" style="left:209px;top:1px;width:1px;height:23px;background:#E4E4E4"></i>
<i class="a" style="left:1px;top:24px;width:258px;height:1px;background:#C8C8F0"></i>
<span class="a lh" style="left:8px;top:7px;color:#000">M</span>
<span class="a lh" style="left:28px;top:7px;color:#999">/</span>
<span class="a lh" style="left:49px;top:7px;color:#000">Addr...</span>
<span class="a lh" style="left:97px;top:7px;color:#000">Name</span>
<span class="a lh" style="left:216px;top:7px;color:#000">Size</span>
<span class="a lt" style="left:1px;top:25px;color:#D8D8F8">Audi (Original)</span>
<svg class="a" style="left:4px;top:40px" width="15" height="13"><path d="M0.5 2.5h1l1-2h5l1.5 2h5.5v10h-14z" fill="#F6E68A" stroke="#101040" stroke-width="1"/><path d="M1 3h13v9H1z" fill="url(#fg)"/></svg>
<span class="a lt" style="left:21px;top:40px;color:#D8D8F8">Hexdump</span>
<span class="a lt" style="left:21px;top:55px;color:#D8D8F8">00000</span>
<span class="a lt" style="left:91px;top:55px;color:#D8D8F8">Hexdump</span>
<svg class="a" style="left:4px;top:70px" width="15" height="13"><path d="M0.5 2.5h1l1-2h5l1.5 2h5.5v10h-14z" fill="#F6E68A" stroke="#101040" stroke-width="1"/><path d="M1 3h13v9H1z" fill="url(#fg)"/></svg>
<span class="a lt" style="left:21px;top:70px;color:#D8D8F8">My maps</span>
<span class="a lt" style="left:21px;top:85px;color:#D8D8F8">EC374</span>
<span class="a lt" style="left:91px;top:85px;color:#D8D8F8">EGR(1)</span>
<i class="a" style="left:213px;top:89px;width:7px;height:7px;background:linear-gradient(90deg,#8080C8,#D0D0F0)"></i>
<span class="a lt" style="left:225px;top:85px;color:#D8D8F8">14x14</span>
<span class="a lt" style="left:21px;top:100px;color:#D8D8F8">EC5BA</span>
<span class="a lt" style="left:91px;top:100px;color:#D8D8F8">EGR(2)</span>
<i class="a" style="left:213px;top:104px;width:6px;height:7px;background:linear-gradient(90deg,#8080C8,#D0D0F0)"></i>
<span class="a lt" style="left:225px;top:100px;color:#D8D8F8">13x14</span>
<span class="a lt" style="left:21px;top:115px;color:#D8D8F8">EDF60</span>
<span class="a lt" style="left:91px;top:115px;color:#D8D8F8">Inverse deiver wish</span>
<i class="a" style="left:212px;top:119px;width:9px;height:6px;background:linear-gradient(90deg,#8080C8,#D0D0F0)"></i>
<span class="a lt" style="left:225px;top:115px;color:#D8D8F8">18x13</span>
<span class="a lt" style="left:21px;top:130px;color:#D8D8F8">EE21C</span>
<span class="a lt" style="left:91px;top:130px;color:#D8D8F8">Driver Wish</span>
<i class="a" style="left:214px;top:134px;width:4px;height:6px;background:linear-gradient(90deg,#8080C8,#D0D0F0)"></i>
<span class="a lt" style="left:225px;top:130px;color:#D8D8F8">8x13</span>
<span class="a lt" style="left:21px;top:145px;color:#D8D8F8">EE45C</span>
<span class="a lt" style="left:91px;top:145px;color:#D8D8F8">Start IQ(1)</span>
<i class="a" style="left:214px;top:150px;width:4px;height:4px;background:linear-gradient(90deg,#8080C8,#D0D0F0)"></i>
<span class="a lt" style="left:225px;top:145px;color:#D8D8F8">9x8</span>
<span class="a lt" style="left:21px;top:160px;color:#D8D8F8">EE58A</span>
<span class="a lt" style="left:91px;top:160px;color:#D8D8F8">Start IQ(2)</span>
<i class="a" style="left:214px;top:165px;width:4px;height:4px;background:linear-gradient(90deg,#8080C8,#D0D0F0)"></i>
<span class="a lt" style="left:225px;top:160px;color:#D8D8F8">9x8</span>
<span class="a lt" style="left:21px;top:175px;color:#D8D8F8">EE93C</span>
<span class="a lt" style="left:91px;top:175px;color:#D8D8F8">Torque Limiteur</span>
<i class="a" style="left:210px;top:181px;width:12px;height:2px;background:linear-gradient(90deg,#8080C8,#D0D0F0)"></i>
<span class="a lt" style="left:225px;top:175px;color:#D8D8F8">25x3</span>
<i class="a" style="left:1px;top:190px;width:258px;height:15px;background:#FFFF60"></i>
<span class="a lt" style="left:21px;top:190px;color:#202000">EEABA</span>
<span class="a lt" style="left:91px;top:190px;color:#202000">Smoke Limiteur II</span>
<i class="a" style="left:213px;top:193px;width:6px;height:8px;background:linear-gradient(90deg,#707050,#B0B070)"></i>
<span class="a lt" style="left:225px;top:190px;color:#202000">13x16</span>
<span class="a lt" style="left:21px;top:205px;color:#D8D8F8">EECAC</span>
<span class="a lt" style="left:91px;top:205px;color:#D8D8F8">Smoke Limiteur 30*</span>
<i class="a" style="left:213px;top:208px;width:6px;height:8px;background:linear-gradient(90deg,#8080C8,#D0D0F0)"></i>
<span class="a lt" style="left:225px;top:205px;color:#D8D8F8">13x16</span>
<span class="a lt" style="left:21px;top:220px;color:#D8D8F8">EEE4C</span>
<span class="a lt" style="left:91px;top:220px;color:#D8D8F8">Smoke Limiteur 83*</span>
<i class="a" style="left:213px;top:223px;width:6px;height:8px;background:linear-gradient(90deg,#8080C8,#D0D0F0)"></i>
<span class="a lt" style="left:225px;top:220px;color:#D8D8F8">13x16</span>
<span class="a lt" style="left:21px;top:235px;color:#D8D8F8">EEFEC</span>
<span class="a lt" style="left:91px;top:235px;color:#D8D8F8">Smoke Limiteur 3*</span>
<i class="a" style="left:213px;top:238px;width:6px;height:8px;background:linear-gradient(90deg,#8080C8,#D0D0F0)"></i>
<span class="a lt" style="left:225px;top:235px;color:#D8D8F8">13x16</span>
<span class="a lt" style="left:21px;top:250px;color:#D8D8F8">EF2B2</span>
<span class="a lt" style="left:91px;top:250px;color:#D8D8F8">Idle RPM</span>
<i class="a" style="left:216px;top:257px;width:1px;height:1px;background:linear-gradient(90deg,#8080C8,#D0D0F0)"></i>
<span class="a lt" style="left:225px;top:250px;color:#D8D8F8">1x1</span>
<span class="a lt" style="left:21px;top:265px;color:#D8D8F8">F20AA</span>
<span class="a lt" style="left:91px;top:265px;color:#D8D8F8">svbl boost limiteur</span>
<i class="a" style="left:216px;top:272px;width:1px;height:1px;background:linear-gradient(90deg,#8080C8,#D0D0F0)"></i>
<span class="a lt" style="left:225px;top:265px;color:#D8D8F8">1x1</span>
<span class="a lt" style="left:21px;top:280px;color:#D8D8F8">F6C8A</span>
<span class="a lt" style="left:91px;top:280px;color:#D8D8F8">Boost Target map</span>
<i class="a" style="left:214px;top:283px;width:5px;height:8px;background:linear-gradient(90deg,#8080C8,#D0D0F0)"></i>
<span class="a lt" style="left:225px;top:280px;color:#D8D8F8">10x16</span>
<span class="a lt" style="left:21px;top:295px;color:#D8D8F8">F6F96</span>
<span class="a lt" style="left:91px;top:295px;color:#D8D8F8">N75 duty cycle</span>
<i class="a" style="left:213px;top:298px;width:6px;height:8px;background:linear-gradient(90deg,#8080C8,#D0D0F0)"></i>
<span class="a lt" style="left:225px;top:295px;color:#D8D8F8">13x16</span>
<span class="a lt" style="left:21px;top:310px;color:#D8D8F8">F73B8</span>
<span class="a lt" style="left:91px;top:310px;color:#D8D8F8">Boost Limit Map</span>
<i class="a" style="left:214px;top:315px;width:5px;height:5px;background:linear-gradient(90deg,#8080C8,#D0D0F0)"></i>
<span class="a lt" style="left:225px;top:310px;color:#D8D8F8">10x10</span>
<span class="a lt" style="left:21px;top:325px;color:#D8D8F8">F9F48</span>
<span class="a lt" style="left:91px;top:325px;color:#D8D8F8">SOI limiteur T*</span>
<i class="a" style="left:214px;top:329px;width:4px;height:6px;background:linear-gradient(90deg,#8080C8,#D0D0F0)"></i>
<span class="a lt" style="left:225px;top:325px;color:#D8D8F8">7x13</span>
<svg class="a" style="left:4px;top:340px" width="15" height="13"><path d="M0.5 2.5h1l1-2h5l1.5 2h5.5v10h-14z" fill="#F6E68A" stroke="#101040" stroke-width="1"/><path d="M1 3h13v9H1z" fill="url(#fg)"/></svg>
<span class="a lt" style="left:21px;top:340px;color:#D8D8F8">Potential maps (1537)</span>
<i class="a" style="left:258px;top:175px;width:1px;height:14px;background:#E0E0F0"></i>
<svg width="0" height="0" style="position:absolute"><defs><linearGradient id="fg" x1="0" y1="0" x2="1" y2="1"><stop offset="0" stop-color="#FFF6A0"/><stop offset="1" stop-color="#F0C880"/></linearGradient></defs></svg></div>
</div>
<div id="data" class="a">
  <div class="a" style="left:0;top:0;width:1px;height:569px;background:#A0A0A0"></div><div class="a" style="left:-1px;top:1px;width:1px;height:568px;background:#FFFFFF"></div>
  <div class="a" style="left:0;top:0;width:1092px;height:1px;background:#A0A0A0"></div>
  <div id="blue" class="a"><span class="m" style="left:302px;top:2px">-(-,Rpm)/-</span>
<span class="m" style="left:36px;top:17px">-</span>
<span class="m" style="left:64px;top:17px">2500</span>
<span class="m" style="left:148px;top:17px">3500</span>
<span class="m" style="left:232px;top:17px">4200</span>
<span class="m" style="left:316px;top:17px">5000</span>
<span class="m" style="left:400px;top:17px">6000</span>
<span class="m" style="left:484px;top:17px">7000</span>
<span class="m" style="left:568px;top:17px">9000</span>
<span class="m" style="left:1px;top:32px">trs/min</span>
<span class="m" style="left:106px;top:32px">3000</span>
<span class="m" style="left:190px;top:32px">3800</span>
<span class="m" style="left:274px;top:32px">4500</span>
<span class="m" style="left:358px;top:32px">5500</span>
<span class="m" style="left:442px;top:32px">6500</span>
<span class="m" style="left:526px;top:32px">7800</span>
<span class="m" style="left:15px;top:62px">700</span>
<span class="m" style="left:71px;top:62px">2440</span>
<span class="m" style="left:113px;top:62px">2550</span>
<span class="m" style="left:155px;top:62px">2670</span>
<span class="m" style="left:197px;top:62px">2800</span>
<span class="m" style="left:239px;top:62px">2885</span>
<span class="m" style="left:281px;top:62px">2975</span>
<span class="m" style="left:323px;top:62px">3020</span>
<span class="m" style="left:365px;top:62px">3200</span>
<span class="m" style="left:407px;top:62px">3450</span>
<span class="m" style="left:449px;top:62px">3900</span>
<span class="m" style="left:491px;top:62px">4410</span>
<span class="m" style="left:533px;top:62px">4780</span>
<span class="m" style="left:575px;top:62px">5180</span>
<i class="bar" style="left:618px;top:73px;height:3px"></i>
<i class="bar" style="left:625px;top:73px;height:3px"></i>
<i class="bar" style="left:632px;top:72px;height:4px"></i>
<i class="bar" style="left:639px;top:72px;height:4px"></i>
<i class="bar" style="left:646px;top:72px;height:4px"></i>
<i class="bar" style="left:653px;top:71px;height:5px"></i>
<i class="bar" style="left:660px;top:71px;height:5px"></i>
<i class="bar" style="left:667px;top:71px;height:5px"></i>
<i class="bar" style="left:674px;top:70px;height:6px"></i>
<i class="bar" style="left:681px;top:68px;height:8px"></i>
<i class="bar" style="left:688px;top:67px;height:9px"></i>
<i class="bar" style="left:695px;top:66px;height:10px"></i>
<i class="bar" style="left:702px;top:64px;height:12px"></i>
<span class="m" style="left:15px;top:77px">740</span>
<span class="m" style="left:71px;top:77px">1610</span>
<span class="m" style="left:113px;top:77px">1690</span>
<span class="m" style="left:155px;top:77px">1770</span>
<span class="m" style="left:197px;top:77px">1860</span>
<span class="m" style="left:239px;top:77px">2050</span>
<span class="m" style="left:281px;top:77px">2320</span>
<span class="m" style="left:323px;top:77px">2915</span>
<span class="m" style="left:365px;top:77px">3200</span>
<span class="m" style="left:407px;top:77px">3450</span>
<span class="m" style="left:449px;top:77px">3900</span>
<span class="m" style="left:491px;top:77px">4410</span>
<span class="m" style="left:533px;top:77px">4780</span>
<span class="m" style="left:575px;top:77px">5180</span>
<i class="bar" style="left:632px;top:90px;height:1px"></i>
<i class="bar" style="left:639px;top:90px;height:1px"></i>
<i class="bar" style="left:646px;top:89px;height:2px"></i>
<i class="bar" style="left:653px;top:89px;height:2px"></i>
<i class="bar" style="left:660px;top:87px;height:4px"></i>
<i class="bar" style="left:667px;top:86px;height:5px"></i>
<i class="bar" style="left:674px;top:85px;height:6px"></i>
<i class="bar" style="left:681px;top:83px;height:8px"></i>
<i class="bar" style="left:688px;top:82px;height:9px"></i>
<i class="bar" style="left:695px;top:81px;height:10px"></i>
<i class="bar" style="left:702px;top:79px;height:12px"></i>
<span class="m" style="left:8px;top:92px">1000</span>
<span class="m" style="left:71px;top:92px">1490</span>
<span class="m" style="left:113px;top:92px">1610</span>
<span class="m" style="left:155px;top:92px">1740</span>
<span class="m" style="left:197px;top:92px">1860</span>
<span class="m" style="left:239px;top:92px">2055</span>
<span class="m" style="left:281px;top:92px">2235</span>
<span class="m" style="left:323px;top:92px">2595</span>
<span class="m" style="left:365px;top:92px">2970</span>
<span class="m" style="left:407px;top:92px">3425</span>
<span class="m" style="left:449px;top:92px">3870</span>
<span class="m" style="left:491px;top:92px">4225</span>
<span class="m" style="left:533px;top:92px">4755</span>
<span class="m" style="left:575px;top:92px">5180</span>
<i class="bar" style="left:632px;top:105px;height:1px"></i>
<i class="bar" style="left:639px;top:105px;height:1px"></i>
<i class="bar" style="left:646px;top:104px;height:2px"></i>
<i class="bar" style="left:653px;top:104px;height:2px"></i>
<i class="bar" style="left:660px;top:103px;height:3px"></i>
<i class="bar" style="left:667px;top:101px;height:5px"></i>
<i class="bar" style="left:674px;top:100px;height:6px"></i>
<i class="bar" style="left:681px;top:98px;height:8px"></i>
<i class="bar" style="left:688px;top:97px;height:9px"></i>
<i class="bar" style="left:695px;top:96px;height:10px"></i>
<i class="bar" style="left:702px;top:94px;height:12px"></i>
<span class="m" style="left:8px;top:107px">1100</span>
<span class="m" style="left:71px;top:107px">1470</span>
<span class="m" style="left:113px;top:107px">1590</span>
<span class="m" style="left:155px;top:107px">1730</span>
<span class="m" style="left:197px;top:107px">1865</span>
<span class="m" style="left:239px;top:107px">2060</span>
<span class="m" style="left:281px;top:107px">2235</span>
<span class="m" style="left:323px;top:107px">2520</span>
<span class="m" style="left:365px;top:107px">2880</span>
<span class="m" style="left:407px;top:107px">3210</span>
<span class="m" style="left:449px;top:107px">3580</span>
<span class="m" style="left:491px;top:107px">3940</span>
<span class="m" style="left:533px;top:107px">4530</span>
<span class="m" style="left:575px;top:107px">5180</span>
<i class="bar" style="left:632px;top:120px;height:1px"></i>
<i class="bar" style="left:639px;top:120px;height:1px"></i>
<i class="bar" style="left:646px;top:119px;height:2px"></i>
<i class="bar" style="left:653px;top:119px;height:2px"></i>
<i class="bar" style="left:660px;top:118px;height:3px"></i>
<i class="bar" style="left:667px;top:117px;height:4px"></i>
<i class="bar" style="left:674px;top:116px;height:5px"></i>
<i class="bar" style="left:681px;top:114px;height:7px"></i>
<i class="bar" style="left:688px;top:113px;height:8px"></i>
<i class="bar" style="left:695px;top:111px;height:10px"></i>
<i class="bar" style="left:702px;top:109px;height:12px"></i>
<span class="m" style="left:8px;top:122px">1250</span>
<span class="m" style="left:71px;top:122px">1460</span>
<span class="m" style="left:113px;top:122px">1565</span>
<span class="m" style="left:155px;top:122px">1735</span>
<span class="m" style="left:197px;top:122px">1870</span>
<span class="m" style="left:239px;top:122px">2065</span>
<span class="m" style="left:281px;top:122px">2230</span>
<span class="m" style="left:323px;top:122px">2500</span>
<span class="m" style="left:365px;top:122px">2765</span>
<span class="m" style="left:407px;top:122px">3050</span>
<span class="m" style="left:449px;top:122px">3365</span>
<span class="m" style="left:491px;top:122px">3700</span>
<span class="m" style="left:533px;top:122px">4330</span>
<span class="m" style="left:575px;top:122px">5150</span>
<i class="bar" style="left:632px;top:135px;height:1px"></i>
<i class="bar" style="left:639px;top:135px;height:1px"></i>
<i class="bar" style="left:646px;top:134px;height:2px"></i>
<i class="bar" style="left:653px;top:134px;height:2px"></i>
<i class="bar" style="left:660px;top:133px;height:3px"></i>
<i class="bar" style="left:667px;top:132px;height:4px"></i>
<i class="bar" style="left:674px;top:131px;height:5px"></i>
<i class="bar" style="left:681px;top:130px;height:6px"></i>
<i class="bar" style="left:688px;top:129px;height:7px"></i>
<i class="bar" style="left:695px;top:127px;height:9px"></i>
<i class="bar" style="left:702px;top:124px;height:12px"></i>
<span class="m" style="left:8px;top:137px">1500</span>
<span class="m" style="left:71px;top:137px">1460</span>
<span class="m" style="left:113px;top:137px">1590</span>
<span class="m" style="left:155px;top:137px">1760</span>
<span class="m" style="left:197px;top:137px">1890</span>
<span class="m" style="left:239px;top:137px">2110</span>
<span class="m" style="left:281px;top:137px">2265</span>
<span class="m" style="left:323px;top:137px">2545</span>
<span class="m" style="left:365px;top:137px">2830</span>
<span class="m" style="left:407px;top:137px">3115</span>
<span class="m" style="left:449px;top:137px">3410</span>
<span class="m" style="left:491px;top:137px">3725</span>
<span class="m" style="left:533px;top:137px">4260</span>
<span class="m" style="left:575px;top:137px">5080</span>
<i class="bar" style="left:632px;top:150px;height:1px"></i>
<i class="bar" style="left:639px;top:150px;height:1px"></i>
<i class="bar" style="left:646px;top:149px;height:2px"></i>
<i class="bar" style="left:653px;top:149px;height:2px"></i>
<i class="bar" style="left:660px;top:148px;height:3px"></i>
<i class="bar" style="left:667px;top:147px;height:4px"></i>
<i class="bar" style="left:674px;top:146px;height:5px"></i>
<i class="bar" style="left:681px;top:145px;height:6px"></i>
<i class="bar" style="left:688px;top:144px;height:7px"></i>
<i class="bar" style="left:695px;top:142px;height:9px"></i>
<i class="bar" style="left:702px;top:140px;height:11px"></i>
<span class="m" style="left:8px;top:152px">1750</span>
<span class="m" style="left:71px;top:152px">1500</span>
<span class="m" style="left:113px;top:152px">1640</span>
<span class="m" style="left:155px;top:152px">1820</span>
<span class="m" style="left:197px;top:152px">1950</span>
<span class="m" style="left:239px;top:152px">2171</span>
<span class="m" style="left:281px;top:152px">2335</span>
<span class="m" style="left:323px;top:152px">2605</span>
<span class="m" style="left:365px;top:152px">2890</span>
<span class="m" style="left:407px;top:152px">3185</span>
<span class="m" style="left:449px;top:152px">3495</span>
<span class="m" style="left:491px;top:152px">3810</span>
<span class="m" style="left:533px;top:152px">4360</span>
<span class="m" style="left:575px;top:152px">4980</span>
<i class="bar" style="left:632px;top:165px;height:1px"></i>
<i class="bar" style="left:639px;top:165px;height:1px"></i>
<i class="bar" style="left:646px;top:164px;height:2px"></i>
<i class="bar" style="left:653px;top:164px;height:2px"></i>
<i class="bar" style="left:660px;top:163px;height:3px"></i>
<i class="bar" style="left:667px;top:162px;height:4px"></i>
<i class="bar" style="left:674px;top:161px;height:5px"></i>
<i class="bar" style="left:681px;top:160px;height:6px"></i>
<i class="bar" style="left:688px;top:159px;height:7px"></i>
<i class="bar" style="left:695px;top:157px;height:9px"></i>
<i class="bar" style="left:702px;top:155px;height:11px"></i>
<span class="m" style="left:8px;top:167px">1900</span>
<span class="m" style="left:71px;top:167px">1530</span>
<span class="m" style="left:113px;top:167px">1680</span>
<span class="m" style="left:155px;top:167px">1860</span>
<span class="m" style="left:197px;top:167px">2005</span>
<span class="m" style="left:239px;top:167px">2211</span>
<span class="m" style="left:281px;top:167px">2370</span>
<span class="m" style="left:323px;top:167px">2650</span>
<span class="m" style="left:365px;top:167px">2950</span>
<span class="m" style="left:407px;top:167px">3250</span>
<span class="m" style="left:449px;top:167px">3570</span>
<span class="m" style="left:491px;top:167px">3890</span>
<span class="m" style="left:533px;top:167px">4520</span>
<span class="m" style="left:575px;top:167px">5040</span>
<i class="bar" style="left:632px;top:180px;height:1px"></i>
<i class="bar" style="left:639px;top:180px;height:1px"></i>
<i class="bar" style="left:646px;top:179px;height:2px"></i>
<i class="bar" style="left:653px;top:178px;height:3px"></i>
<i class="bar" style="left:660px;top:177px;height:4px"></i>
<i class="bar" style="left:667px;top:177px;height:4px"></i>
<i class="bar" style="left:674px;top:176px;height:5px"></i>
<i class="bar" style="left:681px;top:174px;height:7px"></i>
<i class="bar" style="left:688px;top:173px;height:8px"></i>
<i class="bar" style="left:695px;top:171px;height:10px"></i>
<i class="bar" style="left:702px;top:170px;height:11px"></i>
<span class="m" style="left:8px;top:182px">2000</span>
<span class="m" style="left:71px;top:182px">1530</span>
<span class="m" style="left:113px;top:182px">1690</span>
<span class="m" style="left:155px;top:182px">1890</span>
<span class="m" style="left:197px;top:182px">2045</span>
<span class="m" style="left:239px;top:182px">2236</span>
<span class="m" style="left:281px;top:182px">2400</span>
<span class="m" style="left:323px;top:182px">2680</span>
<span class="m" style="left:365px;top:182px">2980</span>
<span class="m" style="left:407px;top:182px">3295</span>
<span class="m" style="left:449px;top:182px">3605</span>
<span class="m" style="left:491px;top:182px">3935</span>
<span class="m" style="left:533px;top:182px">4580</span>
<span class="m" style="left:575px;top:182px">5130</span>
<i class="bar" style="left:632px;top:195px;height:1px"></i>
<i class="bar" style="left:639px;top:194px;height:2px"></i>
<i class="bar" style="left:646px;top:194px;height:2px"></i>
<i class="bar" style="left:653px;top:193px;height:3px"></i>
<i class="bar" style="left:660px;top:192px;height:4px"></i>
<i class="bar" style="left:667px;top:191px;height:5px"></i>
<i class="bar" style="left:674px;top:190px;height:6px"></i>
<i class="bar" style="left:681px;top:189px;height:7px"></i>
<i class="bar" style="left:688px;top:188px;height:8px"></i>
<i class="bar" style="left:695px;top:186px;height:10px"></i>
<i class="bar" style="left:702px;top:184px;height:12px"></i>
<span class="m" style="left:8px;top:197px">2250</span>
<span class="m" style="left:71px;top:197px">1540</span>
<span class="m" style="left:113px;top:197px">1730</span>
<span class="m" style="left:155px;top:197px">1960</span>
<span class="m" style="left:197px;top:197px">2104</span>
<span class="m" style="left:239px;top:197px">2306</span>
<span class="m" style="left:281px;top:197px">2480</span>
<span class="m" style="left:323px;top:197px">2740</span>
<span class="m" style="left:365px;top:197px">3050</span>
<span class="m" style="left:407px;top:197px">3355</span>
<span class="m" style="left:449px;top:197px">3685</span>
<span class="m" style="left:491px;top:197px">4010</span>
<span class="m" style="left:533px;top:197px">4630</span>
<span class="m" style="left:575px;top:197px">5400</span>
<i class="bar" style="left:625px;top:210px;height:1px"></i>
<i class="bar" style="left:632px;top:210px;height:1px"></i>
<i class="bar" style="left:639px;top:209px;height:2px"></i>
<i class="bar" style="left:646px;top:209px;height:2px"></i>
<i class="bar" style="left:653px;top:208px;height:3px"></i>
<i class="bar" style="left:660px;top:207px;height:4px"></i>
<i class="bar" style="left:667px;top:206px;height:5px"></i>
<i class="bar" style="left:674px;top:205px;height:6px"></i>
<i class="bar" style="left:681px;top:204px;height:7px"></i>
<i class="bar" style="left:688px;top:203px;height:8px"></i>
<i class="bar" style="left:695px;top:201px;height:10px"></i>
<i class="bar" style="left:702px;top:198px;height:13px"></i>
<span class="m" style="left:8px;top:212px">2500</span>
<span class="m" style="left:71px;top:212px">1550</span>
<span class="m" style="left:113px;top:212px">1750</span>
<span class="m" style="left:155px;top:212px">1980</span>
<span class="m" style="left:197px;top:212px">2147</span>
<span class="m" style="left:239px;top:212px">2334</span>
<span class="m" style="left:281px;top:212px">2520</span>
<span class="m" style="left:323px;top:212px">2790</span>
<span class="m" style="left:365px;top:212px">3075</span>
<span class="m" style="left:407px;top:212px">3380</span>
<span class="m" style="left:449px;top:212px">3695</span>
<span class="m" style="left:491px;top:212px">4025</span>
<span class="m" style="left:533px;top:212px">4650</span>
<span class="m" style="left:575px;top:212px">5400</span>
<i class="bar" style="left:625px;top:225px;height:1px"></i>
<i class="bar" style="left:632px;top:225px;height:1px"></i>
<i class="bar" style="left:639px;top:224px;height:2px"></i>
<i class="bar" style="left:646px;top:224px;height:2px"></i>
<i class="bar" style="left:653px;top:223px;height:3px"></i>
<i class="bar" style="left:660px;top:222px;height:4px"></i>
<i class="bar" style="left:667px;top:221px;height:5px"></i>
<i class="bar" style="left:674px;top:220px;height:6px"></i>
<i class="bar" style="left:681px;top:219px;height:7px"></i>
<i class="bar" style="left:688px;top:218px;height:8px"></i>
<i class="bar" style="left:695px;top:216px;height:10px"></i>
<i class="bar" style="left:702px;top:213px;height:13px"></i>
<span class="m" style="left:8px;top:227px">3000</span>
<span class="m" style="left:71px;top:227px">1550</span>
<span class="m" style="left:113px;top:227px">1770</span>
<span class="m" style="left:155px;top:227px">2020</span>
<span class="m" style="left:197px;top:227px">2174</span>
<span class="m" style="left:239px;top:227px">2375</span>
<span class="m" style="left:281px;top:227px">2550</span>
<span class="m" style="left:323px;top:227px">2830</span>
<span class="m" style="left:365px;top:227px">3110</span>
<span class="m" style="left:407px;top:227px">3420</span>
<span class="m" style="left:449px;top:227px">3755</span>
<span class="m" style="left:491px;top:227px">4065</span>
<span class="m" style="left:533px;top:227px">4670</span>
<span class="m" style="left:575px;top:227px">5030</span>
<i class="bar" style="left:625px;top:240px;height:1px"></i>
<i class="bar" style="left:632px;top:240px;height:1px"></i>
<i class="bar" style="left:639px;top:239px;height:2px"></i>
<i class="bar" style="left:646px;top:238px;height:3px"></i>
<i class="bar" style="left:653px;top:238px;height:3px"></i>
<i class="bar" style="left:660px;top:237px;height:4px"></i>
<i class="bar" style="left:667px;top:236px;height:5px"></i>
<i class="bar" style="left:674px;top:235px;height:6px"></i>
<i class="bar" style="left:681px;top:234px;height:7px"></i>
<i class="bar" style="left:688px;top:233px;height:8px"></i>
<i class="bar" style="left:695px;top:231px;height:10px"></i>
<i class="bar" style="left:702px;top:230px;height:11px"></i>
<span class="m" style="left:8px;top:242px">3500</span>
<span class="m" style="left:71px;top:242px">1550</span>
<span class="m" style="left:113px;top:242px">1780</span>
<span class="m" style="left:155px;top:242px">2060</span>
<span class="m" style="left:197px;top:242px">2260</span>
<span class="m" style="left:239px;top:242px">2485</span>
<span class="m" style="left:281px;top:242px">2685</span>
<span class="m" style="left:323px;top:242px">2935</span>
<span class="m" style="left:365px;top:242px">3240</span>
<span class="m" style="left:407px;top:242px">3530</span>
<span class="m" style="left:449px;top:242px">3860</span>
<span class="m" style="left:491px;top:242px">4150</span>
<span class="m" style="left:533px;top:242px">4590</span>
<span class="m" style="left:575px;top:242px">5030</span>
<i class="bar" style="left:625px;top:255px;height:1px"></i>
<i class="bar" style="left:632px;top:254px;height:2px"></i>
<i class="bar" style="left:639px;top:254px;height:2px"></i>
<i class="bar" style="left:646px;top:253px;height:3px"></i>
<i class="bar" style="left:653px;top:252px;height:4px"></i>
<i class="bar" style="left:660px;top:252px;height:4px"></i>
<i class="bar" style="left:667px;top:251px;height:5px"></i>
<i class="bar" style="left:674px;top:250px;height:6px"></i>
<i class="bar" style="left:681px;top:249px;height:7px"></i>
<i class="bar" style="left:688px;top:248px;height:8px"></i>
<i class="bar" style="left:695px;top:246px;height:10px"></i>
<i class="bar" style="left:702px;top:245px;height:11px"></i>
<span class="m" style="left:8px;top:257px">4000</span>
<span class="m" style="left:71px;top:257px">1530</span>
<span class="m" style="left:113px;top:257px">1770</span>
<span class="m" style="left:155px;top:257px">2040</span>
<span class="m" style="left:197px;top:257px">2250</span>
<span class="m" style="left:239px;top:257px">2500</span>
<span class="m" style="left:281px;top:257px">2690</span>
<span class="m" style="left:323px;top:257px">2990</span>
<span class="m" style="left:365px;top:257px">3305</span>
<span class="m" style="left:407px;top:257px">3540</span>
<span class="m" style="left:449px;top:257px">3810</span>
<span class="m" style="left:491px;top:257px">4100</span>
<span class="m" style="left:533px;top:257px">4540</span>
<span class="m" style="left:575px;top:257px">4870</span>
<i class="bar" style="left:625px;top:270px;height:1px"></i>
<i class="bar" style="left:632px;top:269px;height:2px"></i>
<i class="bar" style="left:639px;top:269px;height:2px"></i>
<i class="bar" style="left:646px;top:268px;height:3px"></i>
<i class="bar" style="left:653px;top:267px;height:4px"></i>
<i class="bar" style="left:660px;top:266px;height:5px"></i>
<i class="bar" style="left:667px;top:265px;height:6px"></i>
<i class="bar" style="left:674px;top:265px;height:6px"></i>
<i class="bar" style="left:681px;top:264px;height:7px"></i>
<i class="bar" style="left:688px;top:263px;height:8px"></i>
<i class="bar" style="left:695px;top:261px;height:10px"></i>
<i class="bar" style="left:702px;top:260px;height:11px"></i>
<span class="m" style="left:8px;top:272px">4400</span>
<span class="m" style="left:71px;top:272px">1480</span>
<span class="m" style="left:113px;top:272px">1730</span>
<span class="m" style="left:155px;top:272px">2010</span>
<span class="m" style="left:197px;top:272px">2220</span>
<span class="m" style="left:239px;top:272px">2470</span>
<span class="m" style="left:281px;top:272px">2660</span>
<span class="m" style="left:323px;top:272px">2940</span>
<span class="m" style="left:365px;top:272px">3225</span>
<span class="m" style="left:407px;top:272px">3440</span>
<span class="m" style="left:449px;top:272px">3720</span>
<span class="m" style="left:491px;top:272px">4010</span>
<span class="m" style="left:533px;top:272px">4420</span>
<span class="m" style="left:575px;top:272px">4640</span>
<i class="bar" style="left:625px;top:285px;height:1px"></i>
<i class="bar" style="left:632px;top:285px;height:1px"></i>
<i class="bar" style="left:639px;top:284px;height:2px"></i>
<i class="bar" style="left:646px;top:283px;height:3px"></i>
<i class="bar" style="left:653px;top:282px;height:4px"></i>
<i class="bar" style="left:660px;top:282px;height:4px"></i>
<i class="bar" style="left:667px;top:281px;height:5px"></i>
<i class="bar" style="left:674px;top:280px;height:6px"></i>
<i class="bar" style="left:681px;top:279px;height:7px"></i>
<i class="bar" style="left:688px;top:278px;height:8px"></i>
<i class="bar" style="left:695px;top:277px;height:9px"></i>
<i class="bar" style="left:702px;top:276px;height:10px"></i>
<span class="m" style="left:8px;top:287px">4700</span>
<span class="m" style="left:71px;top:287px">1420</span>
<span class="m" style="left:113px;top:287px">1670</span>
<span class="m" style="left:155px;top:287px">1970</span>
<span class="m" style="left:197px;top:287px">2180</span>
<span class="m" style="left:239px;top:287px">2430</span>
<span class="m" style="left:281px;top:287px">2620</span>
<span class="m" style="left:323px;top:287px">2880</span>
<span class="m" style="left:365px;top:287px">3125</span>
<span class="m" style="left:407px;top:287px">3360</span>
<span class="m" style="left:449px;top:287px">3620</span>
<span class="m" style="left:491px;top:287px">3865</span>
<span class="m" style="left:533px;top:287px">4070</span>
<span class="m" style="left:575px;top:287px">4280</span>
<i class="bar" style="left:632px;top:300px;height:1px"></i>
<i class="bar" style="left:639px;top:299px;height:2px"></i>
<i class="bar" style="left:646px;top:298px;height:3px"></i>
<i class="bar" style="left:653px;top:298px;height:3px"></i>
<i class="bar" style="left:660px;top:297px;height:4px"></i>
<i class="bar" style="left:667px;top:296px;height:5px"></i>
<i class="bar" style="left:674px;top:295px;height:6px"></i>
<i class="bar" style="left:681px;top:294px;height:7px"></i>
<i class="bar" style="left:688px;top:294px;height:7px"></i>
<i class="bar" style="left:695px;top:293px;height:8px"></i>
<i class="bar" style="left:702px;top:292px;height:9px"></i>
    <i class="a" style="left:0;top:0;width:1px;height:552px;background:#30306A"></i>
    <i class="a" style="left:0;top:0;width:1074px;height:1px;background:#30306A"></i>
    <i class="a" style="left:52px;top:0;width:1px;height:300px;background:#C8C8F8"></i>
    <i class="a" style="left:54px;top:0;width:1px;height:300px;background:#C8C8F8"></i>
    <i class="a" style="left:1px;top:52px;width:708px;height:1px;background:#C8C8F8"></i>
    <i class="a" style="left:1px;top:54px;width:708px;height:1px;background:#C8C8F8"></i>
  </div>
  <!-- vertical scrollbar -->
  <div class="a vsb" style="left:1075px;top:1px;width:16px;height:552px">
    <svg class="a" style="left:4px;top:6px" width="9" height="5"><path d="M0.5 4.5 L4.5 0.5 L8.5 4.5Z" fill="#3a3a3a"/></svg>
    <div class="a vthumb" style="left:1px;top:18px;width:14px;height:514px"></div>
    <svg class="a" style="left:4px;top:272px" width="8" height="6"><path d="M0 0.5h8M0 2.5h8M0 4.5h8" stroke="#444" stroke-width="1"/></svg>
    <svg class="a" style="left:4px;top:538px" width="9" height="5"><path d="M0.5 0.5 L4.5 4.5 L8.5 0.5Z" fill="#3a3a3a"/></svg>
  </div>
  <div class="a" style="left:1092px;top:1px;width:1px;height:568px;background:#FAFAFA"></div>
  <!-- corner -->
  <div class="a" style="left:1075px;top:553px;width:16px;height:16px;background:#C0C0C0"></div>
  <!-- horizontal scrollbar -->
  <div class="a hsb" style="left:100px;top:553px;width:975px;height:16px">
    <svg class="a" style="left:6px;top:3px" width="5" height="9"><path d="M4.5 0.5 L0.5 4.5 L4.5 8.5Z" fill="#3a3a3a"/></svg>
    <div class="a hthumb" style="left:17px;top:1px;width:939px;height:14px"></div>
    <svg class="a" style="left:482px;top:4px" width="7" height="8"><path d="M1 0v7M3.5 0v7M6 0v7" stroke="#333" stroke-width="1.2"/></svg>
    <svg class="a" style="left:965px;top:3px" width="5" height="9"><path d="M0.5 0.5 L4.5 4.5 L0.5 8.5Z" fill="#1a1a1a"/></svg>
  </div>
  <!-- tabs -->
  <div class="a" style="left:1px;top:553px;width:99px;height:16px;background:#F0F0F0"><svg class="a" style="left:0;top:0" width="99" height="16">
<rect x="0" y="0" width="99" height="16" fill="#A8A8A8"/>
<polygon points="65,0 98,0 91.5,15.5 71.5,15.5" fill="#C8C8C8" stroke="#000" stroke-width="1"/>
<polygon points="40,0 71,0 65.5,15.5 46.5,15.5" fill="#C8C8C8" stroke="#000" stroke-width="1"/>
<polygon points="0.5,0 46,0 39.5,15.5 7.5,15.5" fill="#FFFFFF" stroke="#000" stroke-width="1"/>
<rect x="0" y="0" width="99" height="1" fill="#F8F8F8"/>
</svg>
<span class="a tabt" style="left:7px;top:1px"><span style="text-decoration:underline">T</span>ext</span>
<span class="a tabt" style="left:49px;top:1px">2d</span>
<span class="a tabt" style="left:75px;top:1px">3d</span>
</div>
</div>
<div id="status" class="a">
  <span style="left:3px;letter-spacing:-0.35px">Press F1 to receive help.</span>
  <svg class="a" style="left:801px;top:7px" width="11" height="12"><path d="M0.5 0.5h10v2.5H5l3.5 3.5L5 10h5.5v1.5H0.5v-1.5l3.8-3.8L0.5 2.5z" fill="none" stroke="#787878" stroke-width="1.1"/><path d="M3 2l3 4" stroke="#909090"/></svg>
  <svg class="a" style="left:820px;top:7px" width="13" height="12"><path d="M6.5 0.5l1 2.2 2.3-1 .2 2.4 2.4.4-1.2 2 1.6 1.8-2.3.8.3 2.4-2.4-.5-1 2.2-1.4-1.9-2 1.2-.3-2.4-2.4-.3 1-2.2L.5 6l2-1.4-1-2.2 2.4-.2.4-2.4 2.1 1.2z" fill="none" stroke="#787878" stroke-width="1.3"/></svg>
  <svg class="a" style="left:839px;top:8px" width="11" height="9"><path d="M3 0.5h5l2.5 4-2.5 3.5H3L0.5 4.5z" fill="none" stroke="#888" stroke-width="1.2" stroke-dasharray="3 1.2"/></svg>
  <span style="left:858px;letter-spacing:-0.3px">No CS</span>
  <i class="a" style="left:941px;top:4px;width:1px;height:17px;background:#C8C8C8"></i>
  <svg class="a" style="left:953px;top:7px" width="17" height="10"><path d="M1 6c2-2 4-4 7-4l6-1-1 2 3 1-2 2 1 2-5 1-6 0c-2 0-3-1-3-3z" fill="#fff" stroke="#000" stroke-width="1.1"/><path d="M6 5h5M7 7h5" stroke="#000" stroke-width="0.8"/></svg>
  <span style="left:977px">No OLS-Module</span>
  <i class="a" style="left:1066px;top:4px;width:1px;height:17px;background:#C8C8C8"></i>
  <span style="left:1071px;letter-spacing:-0.28px">Cursor: EEAA0 =&gt; 02500 (02500) -&gt; 0 (0.00%), Width: 13</span>
</div>
</body></html>
